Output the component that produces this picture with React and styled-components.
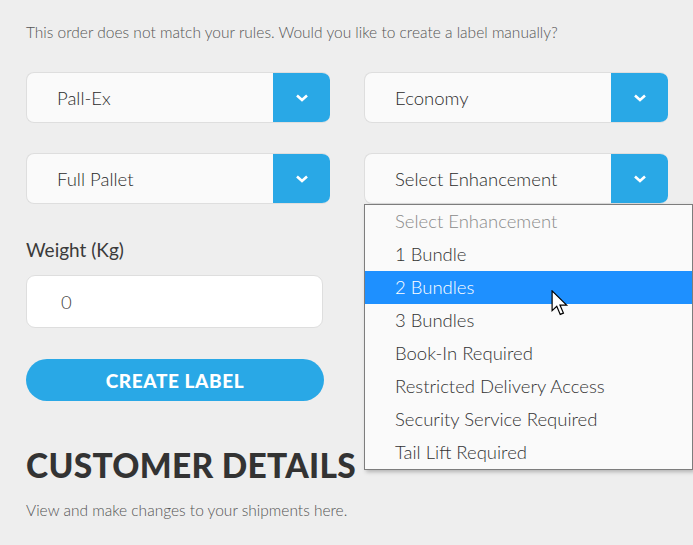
import styled, { createGlobalStyle } from 'styled-components';

const GlobalStyle = createGlobalStyle`
  html, body {
    margin: 0;
    background: #eeeeee;
  }
  body {
    font-family: Lato, "Open Sans", sans-serif;
    color: #333;
  }
`;

const Page = styled.div`
  width: 693px;
  height: 545px;
  box-sizing: border-box;
  padding: 22px 25px 0 26px;
  overflow: hidden;
`;

const Intro = styled.p`
  margin: 0 0 30px;
  font-size: 15.5px;
  font-weight: 300;
  color: #555;
  line-height: 20px;
`;

const SelectGrid = styled.div`
  display: grid;
  grid-template-columns: 304px 304px;
  column-gap: 34px;
  row-gap: 30px;
`;

const SelectWrap = styled.div`
  position: relative;
`;

const SelectBox = styled.div`
  display: flex;
  height: 51px;
  box-sizing: border-box;
  border: 1px solid #dedede;
  border-right: none;
  border-radius: 8px;
  background: #fafafa;
  overflow: hidden;
`;

const SelectText = styled.div`
  flex: 1;
  display: flex;
  align-items: center;
  padding-left: 30px;
  font-size: 18.5px;
  font-weight: 300;
  color: #2b2b2b;
`;

const Arrow = styled.div`
  width: 57px;
  background: #29a8e6;
  display: flex;
  align-items: center;
  justify-content: center;
  color: #fff;
`;

const Menu = styled.ul`
  position: absolute;
  top: 51px;
  left: 0;
  width: 327px;
  margin: 0;
  padding: 0;
  list-style: none;
  background: #fafafa;
  border: 1px solid #7d7d7d;
  box-shadow: 2px 2px 4px rgba(0, 0, 0, 0.25);
  z-index: 2;
`;

const Option = styled.li`
  height: 33px;
  line-height: 33px;
  padding-left: 30px;
  font-size: 18.5px;
  font-weight: 300;
  color: ${(p) => (p.$placeholder ? '#8a8a8a' : p.$active ? '#fff' : '#333')};
  background: ${(p) => (p.$active ? '#1e90ff' : 'transparent')};
  position: relative;
`;

const Cursor = styled.svg`
  position: absolute;
  left: 186px;
  top: 19px;
  z-index: 3;
`;

const Label = styled.div`
  margin: 34px 0 14px;
  font-size: 19px;
  font-weight: 400;
  color: #3a3a3a;
`;

const Input = styled.div`
  width: 297px;
  height: 53px;
  box-sizing: border-box;
  background: #fff;
  border: 1px solid #dedede;
  border-radius: 9px;
  display: flex;
  align-items: center;
  padding-left: 34px;
  font-size: 18.5px;
  font-weight: 300;
  color: #444;
`;

const Button = styled.button`
  display: block;
  margin-top: 31px;
  width: 298px;
  height: 42px;
  border: none;
  border-radius: 21px;
  background: #29a8e6;
  color: #fff;
  font-family: Lato, sans-serif;
  font-size: 19px;
  font-weight: 900;
  letter-spacing: 0.6px;
  padding: 0;
`;

const Heading = styled.h2`
  margin: 42px 0 0;
  font-size: 33.5px;
  font-weight: 900;
  line-height: 44px;
  color: #333;
  letter-spacing: 0.3px;
`;

const SubText = styled.p`
  margin: 14px 0 0;
  font-size: 15.5px;
  font-weight: 300;
  color: #555;
`;

const Chevron = () => (
  <svg width="14" height="10" viewBox="0 0 14 10">
    <path d="M2 2.5 L7 7 L12 2.5" fill="none" stroke="#fff" strokeWidth="2.6" />
  </svg>
);

const Select = ({ value, children }) => (
  <SelectWrap>
    <SelectBox>
      <SelectText>{value}</SelectText>
      <Arrow>
        <Chevron />
      </Arrow>
    </SelectBox>
    {children}
  </SelectWrap>
);

const options = [
  'Select Enhancement',
  '1 Bundle',
  '2 Bundles',
  '3 Bundles',
  'Book-In Required',
  'Restricted Delivery Access',
  'Security Service Required',
  'Tail Lift Required',
];

const App = () => {
  return (
    <>
      <GlobalStyle />
      <Page>
        <Intro>This order does not match your rules. Would you like to create a label manually?</Intro>
        <SelectGrid>
          <Select value="Pall-Ex" />
          <Select value="Economy" />
          <Select value="Full Pallet" />
          <Select value="Select Enhancement">
            <Menu>
              {options.map((o, i) => (
                <Option key={o} $placeholder={i === 0} $active={i === 2}>
                  {o}
                  {i === 2 && (
                    <Cursor width="19" height="28" viewBox="0 0 14 21">
                      <path
                        d="M0.7 0.7 L0.7 15.5 L4.2 12.2 L6.8 18.3 L9.2 17.3 L6.6 11.3 L11.6 11.3 Z"
                        fill="#fff"
                        stroke="#000"
                        strokeWidth="0.9"
                        strokeLinejoin="miter"
                      />
                    </Cursor>
                  )}
                </Option>
              ))}
            </Menu>
          </Select>
        </SelectGrid>
        <Label>Weight (Kg)</Label>
        <Input>0</Input>
        <Button>CREATE LABEL</Button>
        <Heading>CUSTOMER DETAILS</Heading>
        <SubText>View and make changes to your shipments here.</SubText>
      </Page>
    </>
  );
};

export default App;
